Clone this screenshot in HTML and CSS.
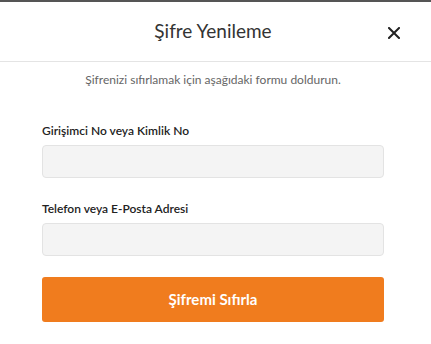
FILE: index.html
```html
<!DOCTYPE html>
<html lang="tr">
<head>
  <meta charset="UTF-8">
  <title>Şifre Yenileme</title>
  <link rel="stylesheet" href="styles.css">
</head>
<body>
<div class="reset-modal">
  <div class="reset-header">
    <h2 class="reset-title">Şifre Yenileme</h2>
    <a href="javascript:void(0);" class="reset-close" aria-label="Kapat">
      <svg width="12" height="12" viewBox="0 0 12 12"><path d="M1 1L11 11M11 1L1 11" stroke="#222" stroke-width="2" stroke-linecap="square"/></svg>
    </a>
  </div>
  <div class="reset-body">
    <p class="reset-info">Şifrenizi sıfırlamak için aşağıdaki formu doldurun.</p>
    <div class="reset-field">
      <label for="userno">Girişimci No veya Kimlik No</label>
      <input type="text" id="userno" class="reset-input">
    </div>
    <div class="reset-field">
      <label for="contact">Telefon veya E-Posta Adresi</label>
      <input type="text" id="contact" class="reset-input">
    </div>
    <a href="javascript:void(0);" class="reset-button">Şifremi Sıfırla</a>
  </div>
</div>
</body>
</html>
```

FILE: styles.css
```css
body {
  margin: 0;
  background: #ffffff;
  font-family: Lato, "Open Sans", sans-serif;
  color: #222222;
}

h2, p, label {
  margin: 0;
  padding: 0;
}

.reset-modal {
  border-top: 2px solid #555555;
}

.reset-header {
  position: relative;
  height: 59px;
  border-bottom: 1px solid #e4e4e4;
  display: flex;
  align-items: center;
  justify-content: center;
  padding: 0 47px 0 42px;
}

.reset-title {
  font-size: 19px;
  font-weight: 400;
  color: #333333;
  padding-bottom: 2px;
}

.reset-close {
  position: absolute;
  right: 31px;
  top: 25px;
  display: block;
  width: 12px;
  height: 12px;
}

.reset-close svg {
  display: block;
}

.reset-body {
  padding: 0 47px 0 42px;
}

.reset-info {
  text-align: center;
  font-size: 12px;
  color: #666666;
  margin-top: 9px;
  line-height: 17px;
}

.reset-field {
  display: flex;
  flex-direction: column;
}

.reset-field:first-of-type {
  margin-top: 35px;
}

.reset-field + .reset-field {
  margin-top: 23px;
}

.reset-field label {
  font-size: 12px;
  font-weight: 600;
  color: #222222;
  line-height: 16px;
  margin-bottom: 6px;
}

.reset-input {
  height: 33px;
  box-sizing: border-box;
  background: #f4f4f4;
  border: 1px solid #e3e3e3;
  border-radius: 4px;
  margin: 0;
}

.reset-button {
  display: block;
  margin-top: 21px;
  height: 45px;
  line-height: 45px;
  text-align: center;
  background: #f07c1e;
  color: #ffffff;
  font-size: 15px;
  font-weight: 700;
  border-radius: 3px;
  text-decoration: none;
}
```
